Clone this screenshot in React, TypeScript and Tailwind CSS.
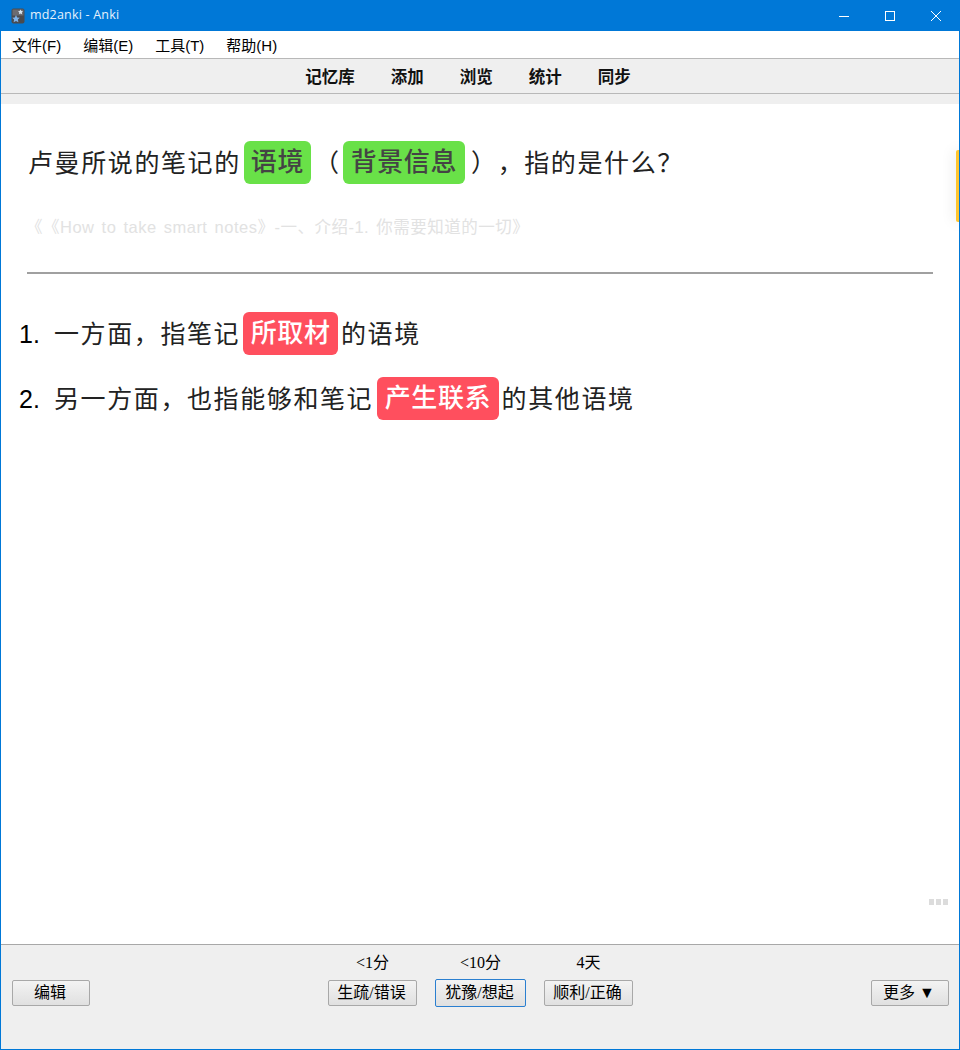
import React from "react";

const serif = "font-['Liberation_Serif','Noto_Sans_CJK_SC',serif]";
const sans = "font-['Liberation_Sans','Noto_Sans_CJK_SC',sans-serif]";

const AppIcon: React.FC = () => (
  <svg width="14" height="16" viewBox="0 0 14 16" className="mr-[5px]">
    <rect x="0.5" y="0.5" width="13" height="15" rx="2" fill="#4a4a4e" />
    <rect x="1.5" y="1.5" width="11" height="6" fill="#6b6b70" />
    <path d="M5 7l1.2 2.4 2.6.4-1.9 1.8.5 2.6L5 13.000l-2.400 1.200.5-2.600L1.200 9.800l2.600-.4z" fill="#7fb2e8" />
    <path d="M9.500 1.500l.8 1.600 1.700.2-1.200 1.200.3 1.700-1.600-.8-1.500.8.3-1.700L7 3.300l1.700-.2z" fill="#d9e6f2" />
  </svg>
);

const TitleBar: React.FC = () => (
  <div className="flex h-[31px] shrink-0 items-center bg-[#0078d7] pl-[10px] text-white">
    <AppIcon />
    <span className="font-['Open_Sans',sans-serif] text-[12.5px] leading-none tracking-[0.2px] text-[#e6f1fb]">
      md2anki - Anki
    </span>
    <div className="ml-auto flex h-full">
      <div className="flex w-[46px] items-center justify-center">
        <svg width="10" height="10" viewBox="0 0 10 10">
          <path d="M0 5.500h10" stroke="#fff" strokeWidth="1" />
        </svg>
      </div>
      <div className="flex w-[46px] items-center justify-center">
        <svg width="10" height="10" viewBox="0 0 10 10">
          <rect x="0.500" y="0.500" width="9" height="9" fill="none" stroke="#fff" strokeWidth="1" />
        </svg>
      </div>
      <div className="flex w-[46px] items-center justify-center">
        <svg width="10" height="10" viewBox="0 0 10 10">
          <path d="M0 0l10 10M10 0L0 10" stroke="#fff" strokeWidth="1" />
        </svg>
      </div>
    </div>
  </div>
);

const MenuBar: React.FC = () => (
  <div className={`flex h-[27px] shrink-0 items-center gap-[22px] bg-white pl-[11px] pt-[1px] text-[15px] leading-none text-black ${sans}`}>
    <span>文件(F)</span>
    <span>编辑(E)</span>
    <span>工具(T)</span>
    <span>帮助(H)</span>
  </div>
);

const TopLinks: React.FC = () => (
  <div className="shrink-0 bg-[#efefef]">
    <div className={`flex h-[36px] items-center justify-center gap-[36px] border-y border-y-[#b8b8b8] pr-[24px] pt-[5px] text-[16.5px] font-bold text-[#111] ${serif}`}>
      <span>记忆库</span>
      <span>添加</span>
      <span>浏览</span>
      <span>统计</span>
      <span>同步</span>
    </div>
    <div className="h-[10px]" />
  </div>
);

const Green: React.FC<{ px: string; children: React.ReactNode }> = ({ px, children }) => (
  <span className={`block h-[43px] rounded-[6px] bg-[#69e148] text-[26px] leading-[43px] font-medium tracking-[0.6px] text-[#444] ${px}`}>
    {children}
  </span>
);

const Red: React.FC<{ children: React.ReactNode }> = ({ children }) => (
  <span className="block h-[43px] rounded-[6px] bg-[#ff4f5e] px-[7.5px] text-[26px] leading-[43px] font-medium tracking-[0.6px] text-white">
    {children}
  </span>
);

const Card: React.FC = () => (
  <div className={`relative flex-1 bg-white px-[26px] pt-[37px] text-[25px] tracking-[1.6px] text-[#222] [text-spacing-trim:space-all] ${serif}`}>
    <div className="ml-[1px] flex h-[43px] items-center whitespace-pre">
      <span className="pt-[2px]">卢曼所说的笔记的</span>
      <span className="ml-[3px]">
        <Green px="px-[7px]">语境</Green>
      </span>
      <span className="ml-[3px] pt-[2px]">（</span>
      <span className="ml-[2px]">
        <Green px="px-[8px]">背景信息</Green>
      </span>
      <span className="ml-[6px] pt-[2px]">），指的是什么？</span>
    </div>
    <p className={`-ml-[1px] mt-[32px] text-[16.5px] leading-[22px] tracking-[0.5px] text-[#e2e2e2] [word-spacing:2px] ${sans}`}>
      《《How to take smart notes》-一、介绍-1. 你需要知道的一切》
    </p>
    <div className="mt-[34px] h-[2px] bg-[#a0a0a0]" />
    <div className="-ml-[8px] mt-[38px] flex flex-col gap-[22px]">
      <div className="flex h-[43px] items-center whitespace-pre">
        <span className={`w-[35px] pt-[2px] text-[25px] tracking-normal text-black ${sans}`}>1.</span>
        <span className="pt-[2px]">一方面，指笔记</span>
        <span className="ml-[3px] mr-[3px]">
          <Red>所取材</Red>
        </span>
        <span className="pt-[2px]">的语境</span>
      </div>
      <div className="flex h-[43px] items-center whitespace-pre">
        <span className={`w-[35px] pt-[2px] text-[25px] tracking-normal text-black ${sans}`}>2.</span>
        <span className="pt-[2px]">另一方面，也指能够和笔记</span>
        <span className="ml-[4px] mr-[3px]">
          <Red>产生联系</Red>
        </span>
        <span className="pt-[2px]">的其他语境</span>
      </div>
    </div>
    <div className="absolute bottom-[39px] right-[11px] flex gap-[2px]">
      <div className="h-[6px] w-[5px] bg-[#dcdcdc]" />
      <div className="h-[6px] w-[5px] bg-[#dcdcdc]" />
      <div className="h-[6px] w-[5px] bg-[#dcdcdc]" />
    </div>
    <div className="absolute -right-[1px] top-[46px] h-[72px] w-[4px] rounded-l-[2px] bg-[#ffc62f] shadow-[0_0_14px_rgba(0,0,0,0.18)]" />
  </div>
);

const Btn: React.FC<{ w: string; focus?: boolean; children: React.ReactNode }> = ({ w, focus, children }) => (
  <button
    className={`flex items-center justify-center rounded-[2px] border bg-linear-to-b from-[#f3f3f3] to-[#e0e0e0] pr-[2px] text-[16px] leading-none text-black ${w} ${
      focus ? "h-[28px] border-[#2a7fd0]" : "h-[26px] border-[#a8a8a8]"
    } ${serif}`}
  >
    {children}
  </button>
);

const Answer: React.FC<{ label: string; w: string; focus?: boolean; text: string }> = ({ label, w, focus, text }) => (
  <div className="flex flex-col items-center">
    <div className={`mb-[6px] h-[20px] text-[16px] leading-[20px] text-black ${serif}`}>{label}</div>
    <div className="flex h-[28px] items-center">
      <Btn w={w} focus={focus}>
        {text}
      </Btn>
    </div>
  </div>
);

const BottomBar: React.FC = () => (
  <div className="flex h-[105px] shrink-0 items-start justify-between border-t border-t-[#a8a8a8] bg-[#efefef] pl-[11px] pr-[10px]">
    <div className="pt-[35px]">
      <Btn w="w-[78px]">编辑</Btn>
    </div>
    <div className="flex gap-[18px] pt-[8px]">
      <Answer label="<1分" w="w-[89px]" text="生疏/错误" />
      <Answer label="<10分" w="w-[91px]" text="犹豫/想起" focus />
      <Answer label="4天" w="w-[89px]" text="顺利/正确" />
    </div>
    <div className="pt-[35px]">
      <Btn w="w-[78px]">更多 ▼</Btn>
    </div>
  </div>
);

export default function App() {
  return (
    <div className="flex h-[1050px] w-[960px] flex-col overflow-hidden border border-t-0 border-[#0078d7] bg-white">
      <TitleBar />
      <MenuBar />
      <TopLinks />
      <Card />
      <BottomBar />
    </div>
  );
}
